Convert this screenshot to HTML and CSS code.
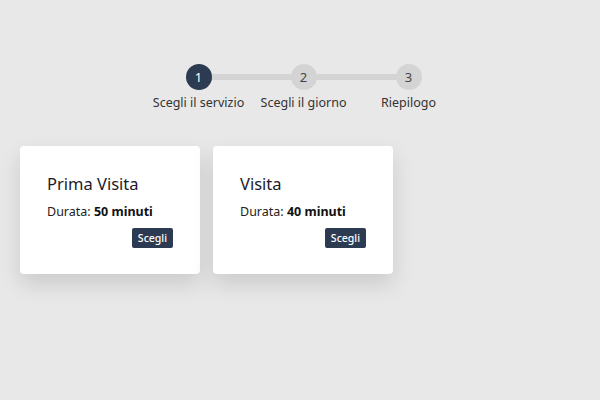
FILE: index.html
```html
<!DOCTYPE html>
<html lang="it">
<head>
<meta charset="utf-8">
<link rel="stylesheet" href="styles.css">
</head>
<body>
<div class="page">
  <div class="stepper">
    <div class="track"></div>
    <div class="step active">
      <div class="dot">1</div>
      <div class="label">Scegli il servizio</div>
    </div>
    <div class="step">
      <div class="dot">2</div>
      <div class="label">Scegli il giorno</div>
    </div>
    <div class="step">
      <div class="dot">3</div>
      <div class="label">Riepilogo</div>
    </div>
  </div>
  <div class="cards">
    <div class="card">
      <h2 class="title">Prima Visita</h2>
      <p class="dur">Durata: <b>50 minuti</b></p>
      <div class="actions"><button class="btn">Scegli</button></div>
    </div>
    <div class="card">
      <h2 class="title">Visita</h2>
      <p class="dur">Durata: <b>40 minuti</b></p>
      <div class="actions"><button class="btn">Scegli</button></div>
    </div>
  </div>
</div>
</body>
</html>
```
FILE: styles.css
```css
html, body {
  margin: 0;
  padding: 0;
  background: #e8e8e8;
  font-family: "Noto Sans", "Open Sans", sans-serif;
  color: #222;
}
.page {
  box-sizing: border-box;
  min-height: 400px;
  padding: 64px 20px 40px 20px;
}
.stepper {
  position: relative;
  display: flex;
  justify-content: center;
  margin-left: 7px;
}
.track {
  position: absolute;
  top: 10px;
  height: 6px;
  left: 50%;
  width: 210px;
  margin-left: -112px;
  background: #d4d4d4;
}
.step {
  width: 105px;
  display: flex;
  flex-direction: column;
  align-items: center;
  position: relative;
}
.dot {
  width: 26px;
  height: 26px;
  border-radius: 50%;
  background: #d4d4d4;
  color: #444;
  font-size: 13px;
  line-height: 26px;
  text-align: center;
}
.step.active .dot {
  background: #2d3b52;
  color: #fff;
}
.label {
  margin-top: 4px;
  font-size: 12.5px;
  line-height: 18px;
  color: #333;
  white-space: nowrap;
}
.cards {
  display: flex;
  gap: 13px;
  margin-top: 34px;
}
.card {
  width: 180px;
  box-sizing: border-box;
  background: #fff;
  border-radius: 4px;
  padding: 26px 27px 26px 27px;
  box-shadow: 0 10px 22px rgba(0,0,0,0.13);
}
.title {
  margin: 0;
  font-size: 16.5px;
  font-weight: 400;
  line-height: 23px;
  color: #1b1b2b;
}
.dur {
  margin: 8px 0 0 0;
  font-size: 12.5px;
  line-height: 18px;
  color: #222;
}
.dur b {
  font-weight: 700;
  color: #111;
}
.actions {
  display: flex;
  justify-content: flex-end;
  margin-top: 7px;
}
.btn {
  height: 20px;
  padding: 0 6px;
  border: 0;
  border-radius: 2px;
  background: #2d3b52;
  color: #fff;
  font-family: "Noto Sans", sans-serif;
  font-size: 10.5px;
  font-weight: 500;
  line-height: 20px;
}
```
